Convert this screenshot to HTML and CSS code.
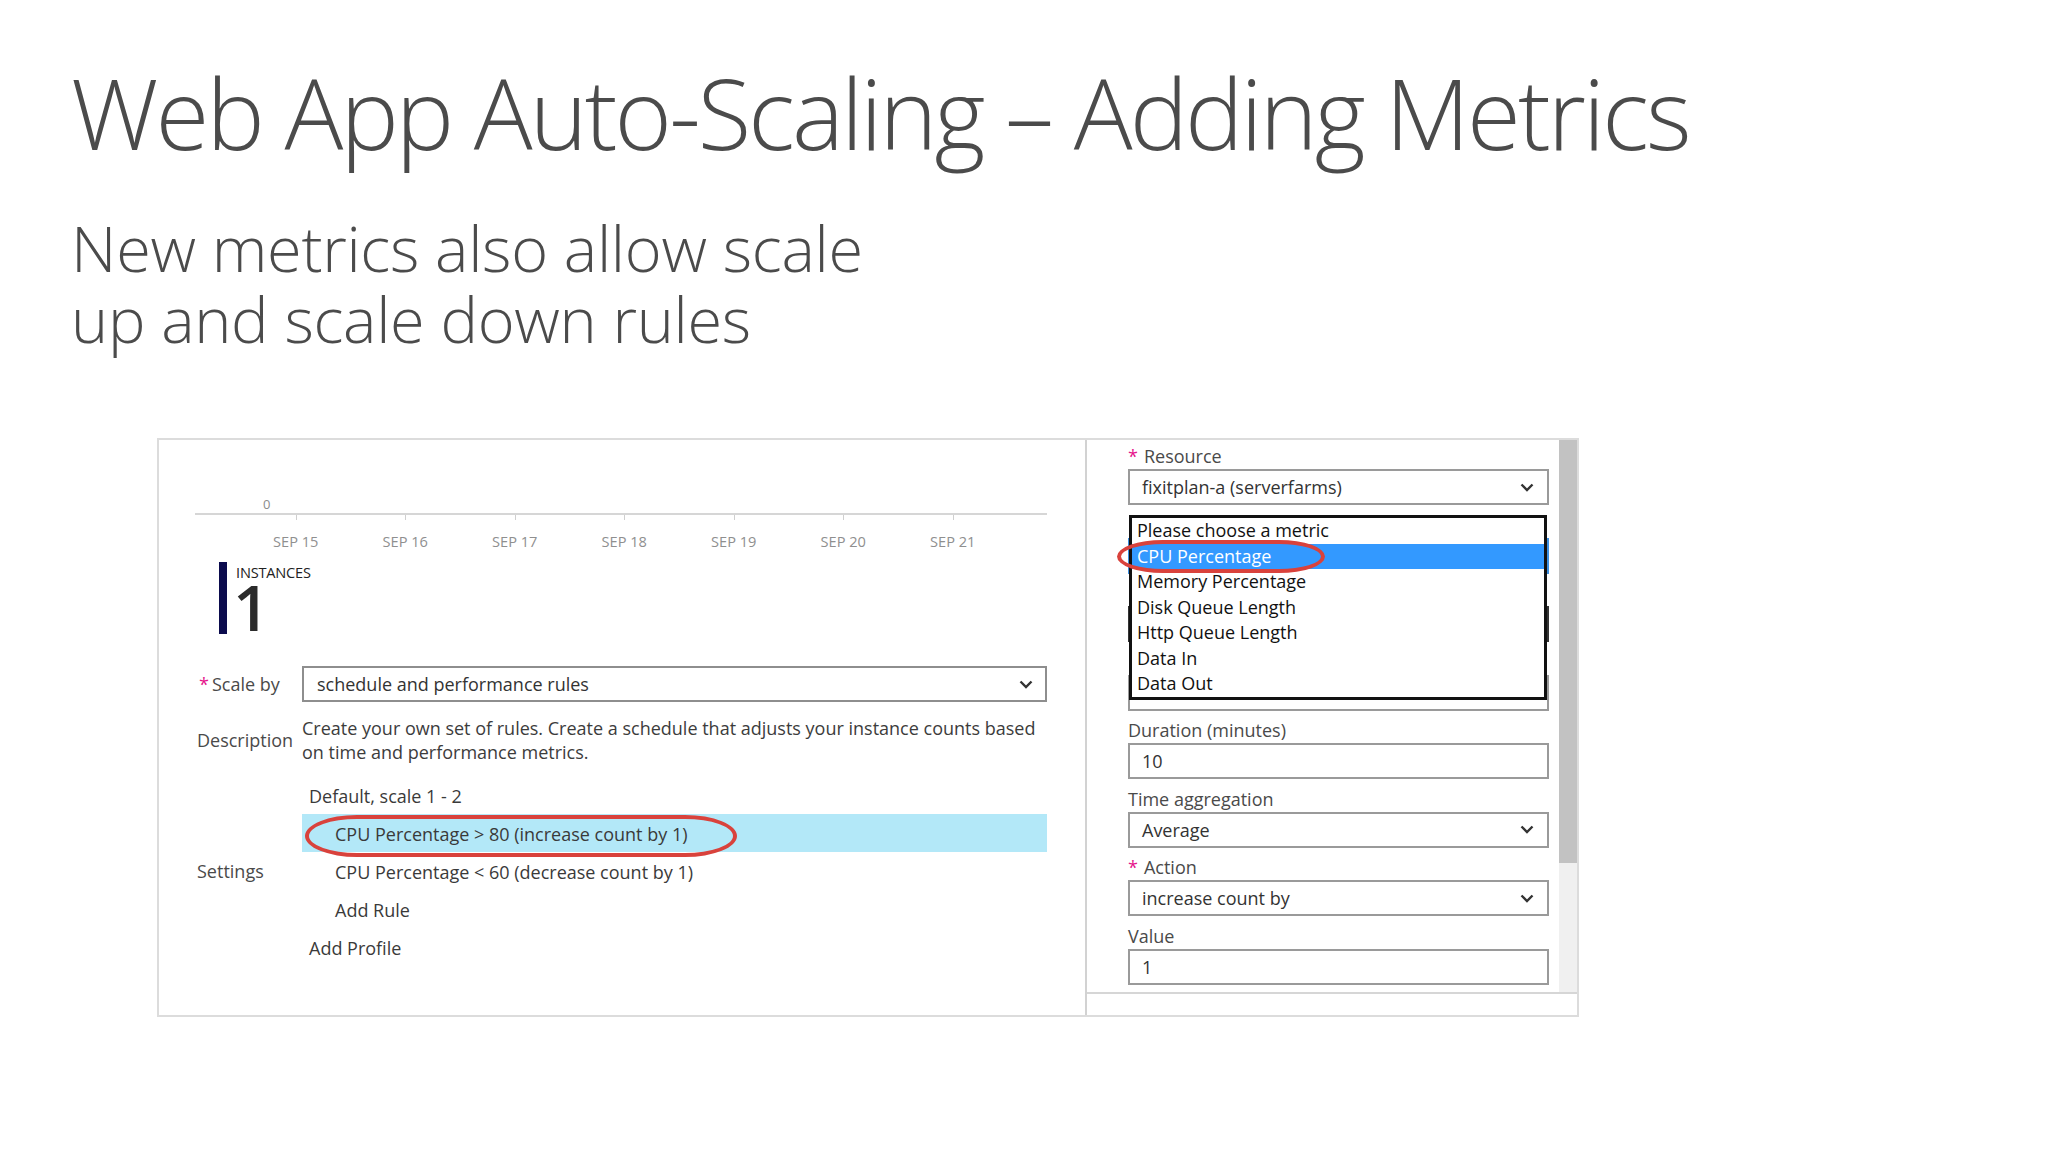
FILE: index.html
```html
<!DOCTYPE html>
<html lang="en">
<head>
<meta charset="utf-8">
<title>Web App Auto-Scaling – Adding Metrics</title>
<link rel="stylesheet" href="styles.css">
</head>
<body>
<div class="slide">
  <h1 class="title">Web App Auto-Scaling – Adding Metrics</h1>
  <p class="subtitle">New metrics also allow scale<br>up and scale down rules</p>

  <div class="shot">
    <div class="pane-left">
      <div class="chart">
        <div class="y-label">0</div>
        <div class="axis"></div>
        <div class="ticks">
          <span class="tick">SEP 15</span>
          <span class="tick">SEP 16</span>
          <span class="tick">SEP 17</span>
          <span class="tick">SEP 18</span>
          <span class="tick">SEP 19</span>
          <span class="tick">SEP 20</span>
          <span class="tick">SEP 21</span>
        </div>
      </div>

      <div class="instances">
        <div class="inst-bar"></div>
        <div class="inst-text">
          <div class="inst-label">INSTANCES</div>
          <div class="inst-value">1</div>
        </div>
      </div>

      <div class="row row-scale">
        <div class="f-label"><span class="req">*</span>Scale by</div>
        <div class="select wide">
          <span>schedule and performance rules</span>
          <svg class="chev" viewBox="0 0 14 9" width="14" height="9"><polyline points="1.5,1.5 7,7 12.5,1.5" fill="none" stroke="#333" stroke-width="2.4"/></svg>
        </div>
      </div>

      <div class="row row-desc">
        <div class="f-label">Description</div>
        <div class="desc">Create your own set of rules. Create a schedule that adjusts your instance counts based<br>on time and performance metrics.</div>
      </div>

      <div class="row row-settings">
        <div class="f-label">Settings</div>
        <div class="settings">
          <div class="s-row">Default, scale 1 - 2</div>
          <div class="s-row rule selected">CPU Percentage &gt; 80 (increase count by 1)</div>
          <div class="s-row rule">CPU Percentage &lt; 60 (decrease count by 1)</div>
          <div class="s-row rule">Add Rule</div>
          <div class="s-row">Add Profile</div>
        </div>
      </div>

      <div class="ring ring-rule"></div>
    </div>

    <div class="pane-right">
      <div class="scroll">
        <div class="fields">
          <div class="group">
            <div class="g-label"><span class="req">*</span>Resource</div>
            <div class="input">
              <span>fixitplan-a (serverfarms)</span>
              <svg class="chev" viewBox="0 0 14 9" width="14" height="9"><polyline points="1.5,1.5 7,7 12.5,1.5" fill="none" stroke="#333" stroke-width="2.4"/></svg>
            </div>
          </div>
          <div class="group">
            <div class="g-label"></div>
            <div class="input focus"></div>
          </div>
          <div class="group">
            <div class="g-label"></div>
            <div class="input dark"></div>
          </div>
          <div class="group">
            <div class="g-label"></div>
            <div class="input"></div>
          </div>
          <div class="group">
            <div class="g-label">Duration (minutes)</div>
            <div class="input"><span>10</span></div>
          </div>
          <div class="group">
            <div class="g-label">Time aggregation</div>
            <div class="input">
              <span>Average</span>
              <svg class="chev" viewBox="0 0 14 9" width="14" height="9"><polyline points="1.5,1.5 7,7 12.5,1.5" fill="none" stroke="#333" stroke-width="2.4"/></svg>
            </div>
          </div>
          <div class="group">
            <div class="g-label"><span class="req">*</span>Action</div>
            <div class="input">
              <span>increase count by</span>
              <svg class="chev" viewBox="0 0 14 9" width="14" height="9"><polyline points="1.5,1.5 7,7 12.5,1.5" fill="none" stroke="#333" stroke-width="2.4"/></svg>
            </div>
          </div>
          <div class="group">
            <div class="g-label">Value</div>
            <div class="input"><span>1</span></div>
          </div>
        </div>
        <div class="scrollbar"><div class="thumb"></div></div>
      </div>
      <div class="footer"></div>

      <div class="metric-list">
        <div class="m-item">Please choose a metric</div>
        <div class="m-item active">CPU Percentage</div>
        <div class="m-item">Memory Percentage</div>
        <div class="m-item">Disk Queue Length</div>
        <div class="m-item">Http Queue Length</div>
        <div class="m-item">Data In</div>
        <div class="m-item">Data Out</div>
      </div>
      <div class="ring ring-metric"></div>
    </div>
  </div>
</div>
</body>
</html>
```

FILE: styles.css
```css
html, body {
  margin: 0;
  background: #ffffff;
}

body {
  font-family: "Open Sans", "Noto Sans", sans-serif;
  color: #333;
}

.slide {
  width: 2048px;
  height: 1152px;
  padding-top: 63px;
  box-sizing: border-box;
  overflow: hidden;
}

.title {
  margin: 0 0 0 71px;
  font-weight: 300;
  font-size: 98px;
  line-height: 98px;
  letter-spacing: -2.9px;
  color: #4b4b4b;
  white-space: nowrap;
}

.subtitle {
  margin: 51px 0 0 71px;
  font-weight: 300;
  font-size: 63px;
  line-height: 71px;
  letter-spacing: -0.3px;
  color: #4b4b4b;
  white-space: nowrap;
}

/* screenshot panel */
.shot {
  margin: 84px 0 0 157px;
  width: 1422px;
  height: 579px;
  box-sizing: border-box;
  border: 2px solid #dcdcdc;
  display: flex;
  background: #fff;
}

.pane-left {
  position: relative;
  width: 928px;
  flex: none;
  box-sizing: border-box;
  border-right: 2px solid #d2d2d2;
  padding: 0 38px 0 36px;
}

.chart {
  padding-top: 56px;
}

.y-label {
  margin-left: 68px;
  font-size: 13px;
  line-height: 16px;
  color: #8c8c8c;
}

.axis {
  margin-top: 1px;
  height: 2px;
  background: #d6d6d6;
}

.ticks {
  display: flex;
  margin-left: 46px;
}

.tick {
  position: relative;
  flex: none;
  width: 109.5px;
  text-align: center;
  padding-top: 17px;
  font-size: 14.6px;
  line-height: 18px;
  color: #8f8f8f;
  white-space: nowrap;
}

.tick::before {
  content: "";
  position: absolute;
  top: 0;
  left: 50%;
  width: 1px;
  height: 5px;
  background: #cfcfcf;
}

.instances {
  display: flex;
  margin: 12px 0 0 24px;
}

.inst-bar {
  width: 8px;
  height: 72px;
  background: #0b0b4d;
}

.inst-text {
  margin-left: 9px;
  padding-top: 3px;
}

.inst-label {
  font-size: 14.6px;
  line-height: 14px;
  color: #222;
  letter-spacing: -0.2px;
}

.inst-value {
  font-size: 64px;
  font-weight: 600;
  line-height: 56px;
  color: #2b2b2b;
  margin-left: -3px;
}

/* form rows */
.row {
  display: flex;
  align-items: center;
}

.row-scale { margin-top: 31px; }
.row-desc { margin-top: 14px; }
.row-settings { margin-top: 12px; }

.f-label {
  flex: none;
  width: 107px;
  box-sizing: border-box;
  padding-left: 2px;
  font-size: 18px;
  line-height: 22px;
  color: #4a4a4a;
  white-space: nowrap;
}

.req {
  color: #e5138b;
  margin-left: 2px;
  margin-right: 3px;
}

.select {
  flex: none;
  width: 745px;
  height: 36px;
  box-sizing: border-box;
  border: 2px solid #8e8e8e;
  padding: 0 12px 0 13px;
  display: flex;
  align-items: center;
  justify-content: space-between;
  font-size: 18px;
  color: #333;
}

.desc {
  width: 745px;
  font-size: 18px;
  line-height: 24px;
  color: #3c3c3c;
  white-space: nowrap;
}

.settings {
  width: 745px;
}

.s-row {
  height: 38px;
  box-sizing: border-box;
  padding: 2px 0 0 7px;
  line-height: 36px;
  font-size: 18px;
  color: #3a3a3a;
  white-space: nowrap;
}

.s-row.rule {
  padding-left: 33px;
}

.s-row.selected {
  background: #b3e8f8;
}

/* annotation rings */
.ring {
  position: absolute;
  box-sizing: border-box;
  border: 4px solid #d9423c;
}

.ring-rule {
  left: 146px;
  top: 375px;
  width: 432px;
  height: 42px;
  border-radius: 52px / 21px;
}

.ring-metric {
  left: 30px;
  top: 100px;
  width: 208px;
  height: 33px;
  border-radius: 46px / 16.5px;
}

/* right pane */
.pane-right {
  position: relative;
  flex: 1;
  display: flex;
  flex-direction: column;
}

.scroll {
  height: 552px;
  display: flex;
  flex: none;
}

.fields {
  flex: 1;
  overflow: hidden;
  padding: 5px 10px 0 41px;
}

.group {
  margin-bottom: 8.5px;
}

.g-label {
  height: 22px;
  font-size: 18px;
  line-height: 22px;
  color: #4a4a4a;
  margin-bottom: 2px;
  white-space: nowrap;
}

.g-label .req {
  margin-left: 0;
  margin-right: 6px;
}

.input {
  height: 36px;
  box-sizing: border-box;
  border: 2px solid #9a9a9a;
  padding: 0 13px 0 12px;
  display: flex;
  align-items: center;
  justify-content: space-between;
  font-size: 18px;
  color: #333;
  white-space: nowrap;
}

.input.focus {
  border-color: #3c8fe0;
}

.input.dark {
  border-color: #333;
}

.chev {
  flex: none;
}

.scrollbar {
  flex: none;
  width: 18px;
  background: #f0f0f0;
}

.thumb {
  height: 423px;
  background: #c2c2c2;
}

.footer {
  flex: 1;
  border-top: 2px solid #d6d6d6;
}

.metric-list {
  position: absolute;
  left: 42px;
  top: 75px;
  width: 418px;
  height: 185px;
  box-sizing: border-box;
  border: 3px solid #111;
  background: #fff;
}

.m-item {
  height: 25.5px;
  line-height: 25.5px;
  padding-left: 5px;
  font-size: 18px;
  color: #111;
  white-space: nowrap;
}

.m-item.active {
  background: #3399ff;
  color: #fff;
}
```
